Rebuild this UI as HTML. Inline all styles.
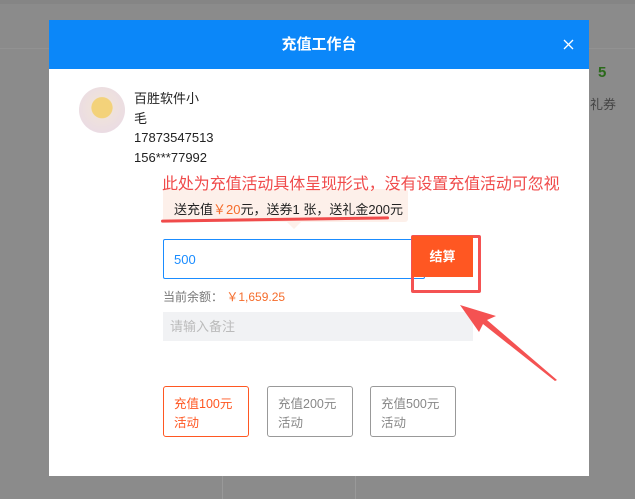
<html><head><style>
body{margin:0;width:635px;height:499px;background:#8b8b8b;position:relative;overflow:hidden;font-family:"Liberation Sans","Noto Sans CJK SC",sans-serif}
.a{position:absolute}
</style></head><body>
<div class="a" style="left:0;top:0;width:635px;height:4px;background:#858585"></div>
<div class="a" style="left:0;top:48px;width:635px;height:1px;background:#929292"></div>
<div class="a" style="left:598px;top:64px;color:#2a6a1a;font-size:15px;font-weight:bold">5</div>
<div class="a" style="left:590px;top:94px;color:#444;font-size:13px">礼券</div>
<div class="a" style="left:222px;top:476px;width:1px;height:23px;background:#999"></div>
<div class="a" style="left:355px;top:476px;width:1px;height:23px;background:#999"></div>
<div class="a" style="left:49px;top:20px;width:540px;height:456px;background:#fff">
 <div class="a" style="left:0;top:0;width:540px;height:49px;background:#0b87f9;color:#fff;font-size:15px;font-weight:bold;text-align:center;line-height:49px">充值工作台</div>
 <svg class="a" style="left:514px;top:19px" width="11" height="11"><path d="M1 1L10 10M10 1L1 10" stroke="#fff" stroke-width="1.3"/></svg>
 <div class="a" style="left:30px;top:67px;width:46px;height:46px;border-radius:50%;background:radial-gradient(circle at 50% 45%,#f3d27a 0 30%,#efe2dc 32%,#e8d8e8 100%)"></div>
 <div class="a" style="left:85px;top:69px;font-size:13px;color:#222;line-height:19.5px">百胜软件小<br>毛<br>17873547513<br>156***77992</div>
 <div class="a" style="left:114px;top:169px;width:245px;height:33px;background:#fdf0ea;border-radius:3px"></div>
 <div class="a" style="left:113px;top:150px;font-size:16px;color:#f04b4b;white-space:nowrap;letter-spacing:-0.1px;z-index:2">此处为充值活动具体呈现形式，没有设置充值活动可忽视</div>
 <div class="a" style="left:125px;top:179px;font-size:13px;color:#222;white-space:nowrap">送充值<span style="color:#f56c2b">￥20</span>元，送券1 张，送礼金200元</div>
 <div class="a" style="left:112px;top:198px;width:228px;height:3px;background:#f04b4b;border-radius:2px;transform:rotate(-0.8deg)"></div>
 <div class="a" style="left:238px;top:202px;width:0;height:0;border-left:7px solid transparent;border-right:7px solid transparent;border-top:7px solid #fdf0ea"></div>
 <div class="a" style="left:114px;top:219px;width:260px;height:38px;border:1px solid #1a8cff;border-radius:2px"></div>
 <div class="a" style="left:125px;top:232px;font-size:13px;color:#1a8cff">500</div>
 <div class="a" style="left:362px;top:215px;width:64px;height:52px;border:3px solid #f45252;border-radius:2px"></div>
 <div class="a" style="left:363px;top:216px;width:61px;height:41px;background:#ff5722;color:#fff;font-weight:bold;font-size:13px;text-align:center;line-height:41px">结算</div>
 <div class="a" style="left:114px;top:268px;font-size:12px;color:#777">当前余额： <span style="color:#f56c2b">￥1,659.25</span></div>
 <div class="a" style="left:114px;top:292px;width:310px;height:29px;background:#f1f2f4;color:#bbb;font-size:13px;line-height:29px;text-indent:7px">请输入备注</div>
 <svg class="a" style="left:0;top:0" width="540" height="456"><polygon points="411,285 447,296 438,300 508,360 506,361 434,304 430,312" fill="#f45252"/></svg>
 <div class="a" style="left:114px;top:366px;width:86px;height:51px;border:1px solid #ff5722;border-radius:3px;color:#ff5722;font-size:12.5px;line-height:19px;padding:8px 0 0 10px;box-sizing:border-box">充值100元<br>活动</div>
 <div class="a" style="left:218px;top:366px;width:86px;height:51px;border:1px solid #999;border-radius:3px;color:#888;font-size:12.5px;line-height:19px;padding:8px 0 0 10px;box-sizing:border-box">充值200元<br>活动</div>
 <div class="a" style="left:321px;top:366px;width:86px;height:51px;border:1px solid #999;border-radius:3px;color:#888;font-size:12.5px;line-height:19px;padding:8px 0 0 10px;box-sizing:border-box">充值500元<br>活动</div>
</div>
</body></html>
